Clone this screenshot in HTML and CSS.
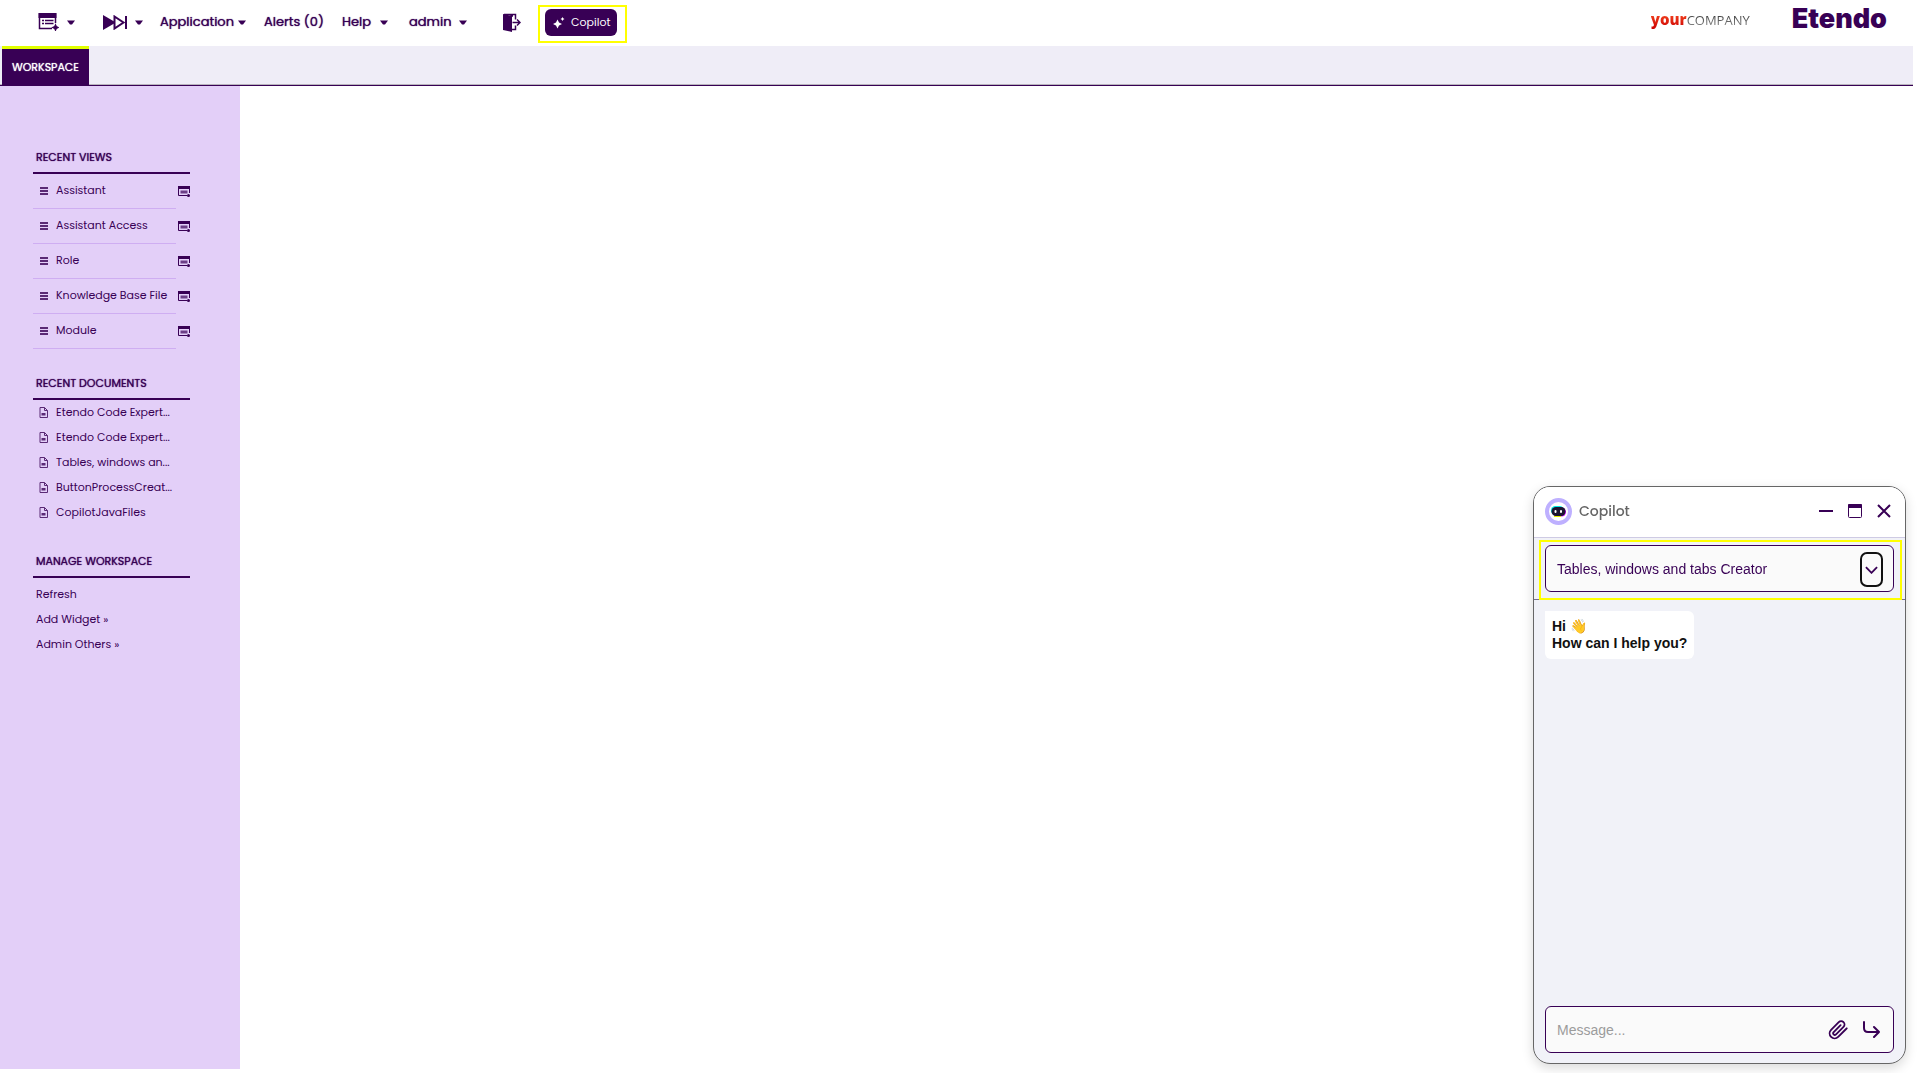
FILE: index.html
```html
<!DOCTYPE html>
<html lang="en">
<head>
  <meta charset="UTF-8" />
  <meta name="viewport" content="width=device-width, initial-scale=1" />
  <title>Etendo</title>
  <link rel="stylesheet" href="styles.css">
</head>
<body>
  <!-- shared icons -->
  <svg class="sprite" aria-hidden="true">
    <symbol id="icon-form" viewBox="0 0 21 18">
      <path d="M.5 0h18v5H.5z" fill="currentColor" />
      <path d="M14 15.500H1.500V1h16v9" fill="none" stroke="currentColor" stroke-width="1.500" />
      <path d="M4 7.500h2M7 7.500h8.500M4 10.500h2M7 10.500h8.500" stroke="currentColor" stroke-width="1.500" />
      <path d="M17.500 12l.8 1.700 1.700.8-1.700.8-.8 1.700-.8-1.700-1.700-.8 1.700-.8z" fill="currentColor" stroke="currentColor" stroke-width="1.500" />
    </symbol>
    <symbol id="icon-form-small" viewBox="0 0 12 12">
      <path d="M0 0h12v3H0z" fill="currentColor" />
      <path d="M9 9.500H.5V1h11v6" fill="none" stroke="currentColor" />
      <path d="M2.500 4.500h7v3h-7z" fill="currentColor" opacity=".7" />
      <circle cx="10.500" cy="9.500" r="1.500" fill="currentColor" />
    </symbol>
    <symbol id="icon-caret" viewBox="0 0 8 5">
      <path d="M0 .5h8L5 4.500H3z" fill="currentColor" />
    </symbol>
    <symbol id="icon-list" viewBox="0 0 8 8">
      <path d="M0 1h8M0 4h8M0 7h8" stroke="currentColor" stroke-width="1.800" />
    </symbol>
    <symbol id="icon-doc" viewBox="0 0 9 11">
      <path d="M1 .5h4.500l3 3v7H1zM5.500.5v3h3" fill="none" stroke="currentColor" />
      <path d="M2.500 6h4v2.500h-4z" fill="currentColor" />
    </symbol>
  </svg>

  <header class="topbar">
    <nav class="menu" aria-label="Main">
      <button class="menu-item menu-new" aria-label="Create new">
        <svg class="icon-form"><use href="#icon-form" /></svg>
        <svg class="caret"><use href="#icon-caret" /></svg>
      </button>
      <button class="menu-item menu-quick" aria-label="Quick launch">
        <svg class="icon-forward" viewBox="0 0 24 15">
          <path d="M0 0l12 7v1L0 15z" fill="currentColor" />
          <path d="M11.500 1.500l9 6-9 6z" fill="none" stroke="currentColor" stroke-width="2" />
          <path d="M23 1v13" stroke="currentColor" stroke-width="2" />
        </svg>
        <svg class="caret"><use href="#icon-caret" /></svg>
      </button>
      <button class="menu-item menu-application">Application <svg class="caret"><use href="#icon-caret" /></svg></button>
      <button class="menu-item menu-alerts">Alerts (0)</button>
      <button class="menu-item menu-help">Help <svg class="caret"><use href="#icon-caret" /></svg></button>
      <button class="menu-item menu-user">admin <svg class="caret"><use href="#icon-caret" /></svg></button>
      <button class="menu-item menu-logout" aria-label="Log out">
        <svg class="icon-logout" viewBox="0 0 18 19">
          <path d="M0 1l9 2v16l-9-2z" fill="currentColor" />
          <path d="M1 1.500h11.500v5M9 16.500h3.500v-4" fill="none" stroke="currentColor" stroke-width="1.500" />
          <path d="M4 1h6v3z" fill="currentColor" />
          <path d="M9.500 9.500h7M14 6.500l3 3-3 3" fill="none" stroke="currentColor" stroke-width="1.500" />
        </svg>
      </button>
      <div class="copilot-launch">
        <button class="copilot-btn">
          <svg viewBox="0 0 12 12">
            <path d="M4.500 2.500l1.500 3 3 1.500-3 1.500-1.500 3-1.500-3L0 7l3-1.500z" fill="currentColor" />
            <path d="M9.500 0l.7 1.300 1.300.7-1.300.7L9.500 4l-.7-1.300L7.500 2l1.300-.7z" fill="currentColor" />
          </svg>
          Copilot
        </button>
      </div>
    </nav>
    <div class="logos">
      <div class="company"><b>your</b><span>COMPANY</span></div>
      <div class="brand">Etendo</div>
    </div>
  </header>

  <div class="tabs">
    <button class="tab">WORKSPACE</button>
  </div>

  <div class="content">
    <aside class="sidebar">
      <section class="views">
        <h2>RECENT VIEWS</h2>
        <ul>
          <li><svg class="icon-list"><use href="#icon-list" /></svg><a href="#">Assistant</a><button aria-label="New Assistant"><svg><use href="#icon-form-small" /></svg></button></li>
          <li><svg class="icon-list"><use href="#icon-list" /></svg><a href="#">Assistant Access</a><button aria-label="New Assistant Access"><svg><use href="#icon-form-small" /></svg></button></li>
          <li><svg class="icon-list"><use href="#icon-list" /></svg><a href="#">Role</a><button aria-label="New Role"><svg><use href="#icon-form-small" /></svg></button></li>
          <li><svg class="icon-list"><use href="#icon-list" /></svg><a href="#">Knowledge Base File</a><button aria-label="New Knowledge Base File"><svg><use href="#icon-form-small" /></svg></button></li>
          <li><svg class="icon-list"><use href="#icon-list" /></svg><a href="#">Module</a><button aria-label="New Module"><svg><use href="#icon-form-small" /></svg></button></li>
        </ul>
      </section>

      <section class="documents">
        <h2>RECENT DOCUMENTS</h2>
        <ul>
          <li><svg class="icon-doc"><use href="#icon-doc" /></svg><a href="#">Etendo Code Expert...</a></li>
          <li><svg class="icon-doc"><use href="#icon-doc" /></svg><a href="#">Etendo Code Expert...</a></li>
          <li><svg class="icon-doc"><use href="#icon-doc" /></svg><a href="#">Tables, windows an...</a></li>
          <li><svg class="icon-doc"><use href="#icon-doc" /></svg><a href="#">ButtonProcessCreat...</a></li>
          <li><svg class="icon-doc"><use href="#icon-doc" /></svg><a href="#">CopilotJavaFiles</a></li>
        </ul>
      </section>

      <section class="manage">
        <h2>MANAGE WORKSPACE</h2>
        <ul>
          <li><a href="#">Refresh</a></li>
          <li><a href="#">Add Widget »</a></li>
          <li><a href="#">Admin Others »</a></li>
        </ul>
      </section>
    </aside>
    <main class="workspace"></main>
  </div>

  <section class="chat" aria-label="Copilot">
    <header class="chat-header">
      <svg class="avatar" viewBox="0 0 27 27">
        <circle cx="13.500" cy="13.500" r="11.500" fill="#fff" stroke="#beb0ff" stroke-width="4" />
        <rect x="6" y="8" width="13" height="9" rx="4.500" fill="#00e5e5" />
        <rect x="8" y="9.500" width="13" height="9" rx="4.500" fill="#d400ff" />
        <path d="M9 18.500h7" stroke="#e6f000" />
        <rect x="6.500" y="9" width="14" height="9" rx="4.500" fill="#1b1430" />
        <rect x="9.500" y="12" width="2" height="3" rx="1" fill="#fff" />
        <rect x="15" y="12" width="2" height="3" rx="1" fill="#fff" />
      </svg>
      <span class="chat-title">Copilot</span>
      <button aria-label="Minimize">
        <svg viewBox="0 0 14 14"><path d="M0 7h14" stroke="currentColor" stroke-width="2" /></svg>
      </button>
      <button aria-label="Maximize">
        <svg viewBox="0 0 14 14">
          <rect x=".5" y=".5" width="13" height="13" rx="1" fill="none" stroke="currentColor" />
          <path d="M0 1q0-1 1-1h12q1 0 1 1v3H0z" fill="currentColor" />
        </svg>
      </button>
      <button aria-label="Close">
        <svg viewBox="0 0 14 14"><path d="M1 1l12 12M13 1L1 13" stroke="currentColor" stroke-width="2" /></svg>
      </button>
    </header>

    <div class="assistant-bar">
      <div class="assistant-highlight">
        <div class="assistant-field">
          <select aria-label="Assistant">
            <option>Tables, windows and tabs Creator</option>
          </select>
          <span class="chevron">
            <svg viewBox="0 0 14 8"><path d="M1 1l6 6 6-6" fill="none" stroke="currentColor" stroke-width="2" /></svg>
          </span>
        </div>
      </div>
    </div>

    <div class="messages">
      <p class="bubble">Hi 👋<br>How can I help you?</p>
    </div>

    <form class="composer">
      <input type="text" placeholder="Message..." aria-label="Message" />
      <button type="button" aria-label="Attach file">
        <svg class="icon-clip" viewBox="0 0 24 24">
          <path d="M21.400 11.100l-9.200 9.200a6 6 0 0 1-8.500-8.500l9.200-9.200a4 4 0 0 1 5.700 5.700l-9.200 9.200a2 2 0 0 1-2.800-2.800l8.500-8.500M21.400 11.100l1.100-1.100" fill="none" stroke="currentColor" stroke-width="2.200" stroke-linecap="round" />
        </svg>
      </button>
      <button type="submit" aria-label="Send">
        <svg class="icon-send" viewBox="0 0 17 17">
          <path d="M1 1v6q0 4 4 4h11M11 6l5 5-5 5" fill="none" stroke="currentColor" stroke-width="2" stroke-linecap="round" stroke-linejoin="round" />
        </svg>
      </button>
    </form>
  </section>
</body>
</html>
```
FILE: styles.css
```css
* {
  box-sizing: border-box;
}
body {
  margin: 0;
  padding-bottom: 4px;
  min-height: 100vh;
  display: flex;
  flex-direction: column;
  font-family: Poppins, Inter, sans-serif;
  font-size: 11px;
  color: #380055;
  background: #fff;
}
button {
  padding: 0;
  border: none;
  background: none;
  color: inherit;
  font: inherit;
  cursor: pointer;
}
svg {
  display: block;
}
a {
  color: inherit;
  text-decoration: none;
}
ul {
  list-style: none;
  margin: 0;
  padding: 0;
}
.sprite {
  position: absolute;
  width: 0;
  height: 0;
}

/* Top bar */
.topbar {
  height: 46px;
  display: flex;
  justify-content: space-between;
  padding: 0 32px 0 38px;
}
.menu {
  display: flex;
  align-items: flex-start;
}
.menu-item {
  height: 44px;
  display: flex;
  align-items: center;
  justify-content: space-between;
  font-size: 13px;
  text-shadow: 0 0 1px currentColor;
  white-space: nowrap;
}
.caret {
  width: 8px;
  height: 5px;
}
.icon-form {
  width: 21px;
  height: 18px;
}
.icon-forward {
  width: 24px;
  height: 15px;
}
.icon-logout {
  width: 18px;
  height: 19px;
}
.menu-new {
  width: 37px;
  margin-right: 28px;
}
.menu-quick {
  width: 40px;
  margin-right: 17px;
}
.menu-application {
  width: 86px;
  margin-right: 18px;
}
.menu-alerts {
  width: 60px;
  margin-right: 18px;
}
.menu-help {
  width: 46px;
  margin-right: 21px;
}
.menu-user {
  width: 58px;
  margin-right: 36px;
}
.menu-logout {
  width: 18px;
  margin-right: 17px;
}
.copilot-launch {
  margin-top: 5px;
  padding: 2px 8px 5px 5px;
  border: 2px solid #ffff00;
}
.copilot-btn {
  width: 72px;
  height: 27px;
  display: flex;
  align-items: center;
  gap: 6px;
  padding: 0 8px;
  border-radius: 6px;
  background: #380055;
  color: #fff;
  font-size: 11px;
}
.copilot-btn svg {
  flex: none;
  width: 12px;
  height: 12px;
}
.logos {
  display: flex;
  align-items: center;
  gap: 42px;
  height: 37px;
}
.company {
  font-family: "Open Sans", sans-serif;
  font-size: 13px;
}
.company b {
  font-size: 15px;
  font-weight: 800;
  background: linear-gradient(#ff5a2a, #cc0000);
  background-clip: text;
  color: transparent;
}
.company span {
  background: linear-gradient(#222, #999);
  background-clip: text;
  color: transparent;
}
.brand {
  font-family: Inter, sans-serif;
  font-size: 27px;
  font-weight: 900;
}

/* Tabs */
.tabs {
  height: 40px;
  margin-right: 6px;
  padding-left: 2px;
  background: #efedf7;
  border-bottom: 1px solid #380055;
  box-shadow: inset 0 -1px #b8b4bd;
  display: flex;
}
.tab {
  padding: 0 9px;
  min-width: 87px;
  border-top: 3px solid #e1ff00;
  background: #380055;
  color: #fff;
  text-shadow: 0 0 1px currentColor;
}

/* Sidebar */
.content {
  flex: 1;
  display: flex;
}
.workspace {
  flex: 1;
}
.sidebar {
  width: 240px;
  padding: 60px 50px 0 33px;
  background: #e3cff8;
}
.sidebar h2 {
  margin: 0;
  padding: 0 3px;
  height: 28px;
  line-height: 22px;
  border-bottom: 2px solid #380055;
  font-size: 11px;
  font-weight: 400;
  text-shadow: 0 0 1px currentColor;
  white-space: nowrap;
}
.sidebar a {
  white-space: nowrap;
}
.views li {
  position: relative;
  display: flex;
  align-items: center;
  height: 35px;
  margin-right: 14px;
  padding-left: 7px;
  border-bottom: 1px solid #cfaef2;
}
.views li a {
  padding-bottom: 2px;
}
.views li button {
  position: absolute;
  right: -14px;
  top: 12px;
}
.views li button svg {
  width: 12px;
  height: 12px;
}
.icon-list {
  width: 8px;
  height: 8px;
  margin-right: 8px;
  opacity: 0.8;
}
.icon-doc {
  width: 9px;
  height: 11px;
  margin-right: 8px;
  opacity: 0.8;
}
.documents {
  margin-top: 23px;
}
.documents li {
  display: flex;
  align-items: center;
  height: 25px;
  padding-left: 6px;
}
.manage {
  margin-top: 25px;
}
.manage ul {
  padding: 4px 3px;
}
.manage li {
  height: 25px;
  line-height: 25px;
}

/* Copilot window */
.chat {
  position: fixed;
  right: 13px;
  bottom: 9px;
  width: 373px;
  height: 578px;
  display: flex;
  flex-direction: column;
  overflow: hidden;
  border: 1px solid #666;
  border-radius: 17px;
  background: #f1f2f8;
  box-shadow: 0 4px 12px rgba(0, 0, 0, 0.15);
  font-family: "Liberation Sans", Arial, sans-serif;
}
.chat-header {
  height: 51px;
  display: flex;
  align-items: center;
  gap: 15px;
  padding: 0 14px 2px 11px;
  border-bottom: 1px solid #cfcbe3;
  background: #fff;
}
.chat-header button svg {
  width: 14px;
  height: 14px;
}
.avatar {
  width: 27px;
  height: 27px;
}
.chat-title {
  flex: 1;
  margin-left: -8px;
  font-family: Poppins, Inter, sans-serif;
  font-size: 14px;
  font-weight: 500;
  color: #666;
}
.assistant-bar {
  padding: 2px 3px 0 5px;
  border-bottom: 1px solid #77708a;
}
.assistant-highlight {
  margin-bottom: -1px;
  padding: 3px 6px 6px 4px;
  border: 2px solid #ffff00;
}
.assistant-field {
  position: relative;
}
.assistant-field select {
  display: block;
  width: 100%;
  height: 47px;
  padding: 0 48px 0 11px;
  appearance: none;
  border: 1px solid #380055;
  border-radius: 6px;
  background: #fafafa;
  color: #380055;
  font-family: inherit;
  font-size: 14px;
}
.chevron {
  position: absolute;
  right: 11px;
  top: 7px;
  width: 23px;
  height: 35px;
  display: grid;
  place-items: center;
  border: 2px solid #111;
  border-radius: 7px;
  pointer-events: none;
}
.chevron svg {
  width: 13px;
  height: 8px;
}
.messages {
  flex: 1;
  padding: 11px;
}
.bubble {
  width: fit-content;
  margin: 0;
  padding: 7px;
  border-radius: 0 6px 6px 6px;
  background: #fff;
  color: #111;
  font-size: 14px;
  font-weight: 700;
  line-height: 17px;
}
.composer {
  height: 47px;
  margin: 0 11px 10px;
  padding: 0 13px 0 11px;
  display: flex;
  align-items: center;
  gap: 15px;
  border: 1px solid #380055;
  border-radius: 6px;
  background: #fafafa;
}
.composer input {
  flex: 1;
  min-width: 0;
  padding: 0;
  border: none;
  outline: none;
  background: none;
  color: #380055;
  font-family: inherit;
  font-size: 14px;
}
.composer input::placeholder {
  color: #9c9c9c;
}
.icon-clip {
  width: 20px;
  height: 20px;
}
.icon-send {
  width: 17px;
  height: 17px;
}
```
